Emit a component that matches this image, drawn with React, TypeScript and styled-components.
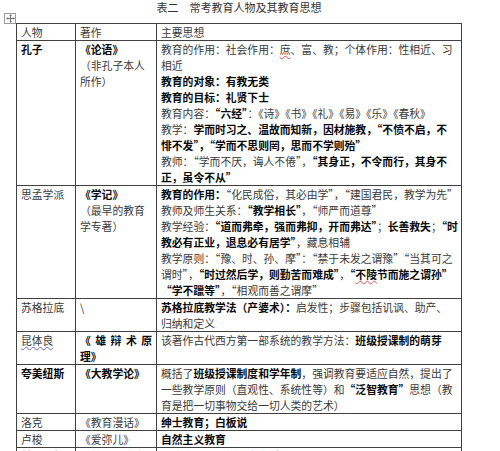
import React from "react";
import styled, { createGlobalStyle } from "styled-components";

const Global = createGlobalStyle`
  html, body { margin: 0; padding: 0; background: #fff; }
  body {
    font-family: "Noto Sans CJK SC", "Noto Sans", sans-serif;
    color: #3a3a3a;
  }
`;

const Page = styled.div`
  width: 500px;
  height: 451px;
  overflow: hidden;
  padding-left: 16px;
  box-sizing: border-box;
`;

const Title = styled.div`
  width: 446px;
  height: 23px;
  text-align: center;
  font-size: 11px;
  line-height: 14px;
  color: #333;
`;

const TableWrap = styled.div`
  position: relative;
  width: 446px;
`;

const MoveHandle = styled.div`
  position: absolute;
  left: -12px;
  top: -10px;
  width: 10px;
  height: 9px;
  border: 1px solid #9a9a9a;
  background: #fff;
  display: flex;
  align-items: center;
  justify-content: center;
`;

const Table = styled.table`
  border-collapse: collapse;
  table-layout: fixed;
  width: 446px;
  font-size: 10.8px;
  line-height: 16px;
`;

const Col = styled.col<{ $w: number }>`
  width: ${(p) => p.$w}px;
`;

const Cell = styled.td`
  border: 1px solid #404040;
  padding: 0 1px 0 4px;
  vertical-align: top;
  overflow: hidden;
`;

const Line = styled.div`
  height: 16px;
  white-space: nowrap;
`;

const JustLine = styled.div`
  height: 16px;
  display: flex;
  justify-content: space-between;
  padding-right: 3px;
`;

const Seg = styled.span<{ $b?: boolean; $mark?: "red" | "blue" }>`
  font-weight: ${(p) => (p.$b ? 700 : 400)};
  color: ${(p) => (p.$b ? "#0a0a0a" : "#3a3a3a")};
  text-decoration: ${(p) =>
    p.$mark ? `underline wavy ${p.$mark === "red" ? "#e05050" : "#6a6ad0"}` : "none"};
  text-decoration-thickness: 1px;
  text-underline-offset: 1px;
`;

type Part = { t: string; b: boolean; mark?: "red" | "blue" };

function parse(src: string): Part[] {
  const parts: Part[] = [];
  let b = false;
  let mark: "red" | "blue" | undefined;
  let buf = "";
  const flush = () => {
    if (buf) parts.push({ t: buf, b, mark });
    buf = "";
  };
  for (const ch of src) {
    if (ch === "*") {
      flush();
      b = !b;
    } else if (ch === "~") {
      flush();
      mark = mark ? undefined : "red";
    } else if (ch === "^") {
      flush();
      mark = mark ? undefined : "blue";
    } else buf += ch;
  }
  flush();
  return parts;
}

const Rich: React.FC<{ src: string }> = ({ src }) => {
  if (src.startsWith("|")) {
    const parts = parse(src.slice(1));
    const chars: { c: string; b: boolean }[] = [];
    parts.forEach((p) => Array.from(p.t).forEach((c) => chars.push({ c, b: p.b })));
    return (
      <JustLine>
        {chars.map((x, i) => (
          <Seg key={i} $b={x.b}>
            {x.c}
          </Seg>
        ))}
      </JustLine>
    );
  }
  return (
    <Line>
      {parse(src).map((p, i) => (
        <Seg key={i} $b={p.b} $mark={p.mark}>
          {p.t}
        </Seg>
      ))}
    </Line>
  );
};

type Row = { person: string; work: string[]; thought: string[] };

const rows: Row[] = [
  {
    person: "*孔子*",
    work: ["*《论语》*", "（非孔子本人", "所作）"],
    thought: [
      "教育的作用：社会作用：~庶~、富、教；个体作用：性相近、习",
      "相近",
      "*教育的对象：有教无类*",
      "*教育的目标：礼贤下士*",
      "教育内容：*“六经”*：《诗》《书》《礼》《易》《乐》《春秋》",
      "教学：*学而时习之、温故而知新，因材施教，“不愤不启，不*",
      "*悱不发”，“学而不思则罔，思而不学则殆”*",
      "教师：“学而不厌，诲人不倦”，*“其身正，不令而行，其身不*",
      "*正，虽令不从”*",
    ],
  },
  {
    person: "思孟学派",
    work: ["*《学记》*", "（最早的教育", "学专著）"],
    thought: [
      "*教育的作用：*“化民成俗，其必由学”，“建国君民，教学为先”",
      "教师及师生关系：*“教学相长”*，“师严而道尊”",
      "教学经验：*“道而弗牵，强而弗抑，开而弗达”*；*长善救失*；*“时*",
      "*教必有正业，退息必有居学”*，藏息相辅",
      "教学原则：“豫、时、孙、摩”：“禁于未发之谓豫”“当其可之",
      "谓时”，*“时过然后学，则勤苦而难成”*，*“~不陵~节而施之谓孙”*",
      "*“学不躐等”*，“相观而善之谓摩”",
    ],
  },
  {
    person: "苏格拉底",
    work: ["\\"],
    thought: ["*苏格拉底教学法（产婆术）：*启发性；步骤包括讥讽、助产、", "归纳和定义"],
  },
  {
    person: "^昆体良^",
    work: ["|*《雄辩术原*", "*理》*"],
    thought: ["该著作古代西方第一部系统的教学方法：*班级授课制的萌芽*"],
  },
  {
    person: "*夸美纽斯*",
    work: ["*《大教学论》*"],
    thought: [
      "概括了*班级授课制度和学年制*，强调教育要适应自然，提出了",
      "一些教学原则（直观性、系统性等）和*“泛智教育”*思想（教",
      "育是把一切事物交给一切人类的艺术）",
    ],
  },
  { person: "洛克", work: ["《教育漫话》"], thought: ["*绅士教育；白板说*"] },
  { person: "卢梭", work: ["《爱弥儿》"], thought: ["*自然主义教育*"] },
  { person: "*赫尔巴特*", work: ["*《普通教育学》*"], thought: ["*教育学作为一门独立学科的标志*"] },
];

const MoveIcon = () => (
  <svg width="9" height="9" viewBox="0 0 9 9" fill="none" stroke="#666" strokeWidth="0.9">
    <path d="M4.5 0.8V8.2M0.8 4.5H8.2" />
    <path d="M3.4 1.9L4.5 0.8L5.6 1.9M3.4 7.1L4.5 8.2L5.6 7.1M1.9 3.4L0.8 4.5L1.9 5.6M7.1 3.4L8.2 4.5L7.1 5.6" />
  </svg>
);

export default function App() {
  return (
    <>
      <Global />
      <Page>
        <Title>表二　常考教育人物及其教育思想</Title>
        <TableWrap>
          <MoveHandle>
            <MoveIcon />
          </MoveHandle>
          <Table>
            <colgroup>
              <Col $w={59} />
              <Col $w={81} />
              <Col $w={305} />
            </colgroup>
            <tbody>
              <tr>
                <Cell>
                  <Rich src="人物" />
                </Cell>
                <Cell>
                  <Rich src="著作" />
                </Cell>
                <Cell>
                  <Rich src="主要思想" />
                </Cell>
              </tr>
              {rows.map((r, i) => (
                <tr key={i}>
                  <Cell>
                    <Rich src={r.person} />
                  </Cell>
                  <Cell>
                    {r.work.map((w, j) => (
                      <Rich key={j} src={w} />
                    ))}
                  </Cell>
                  <Cell>
                    {r.thought.map((t, j) => (
                      <Rich key={j} src={t} />
                    ))}
                  </Cell>
                </tr>
              ))}
            </tbody>
          </Table>
        </TableWrap>
      </Page>
    </>
  );
}
